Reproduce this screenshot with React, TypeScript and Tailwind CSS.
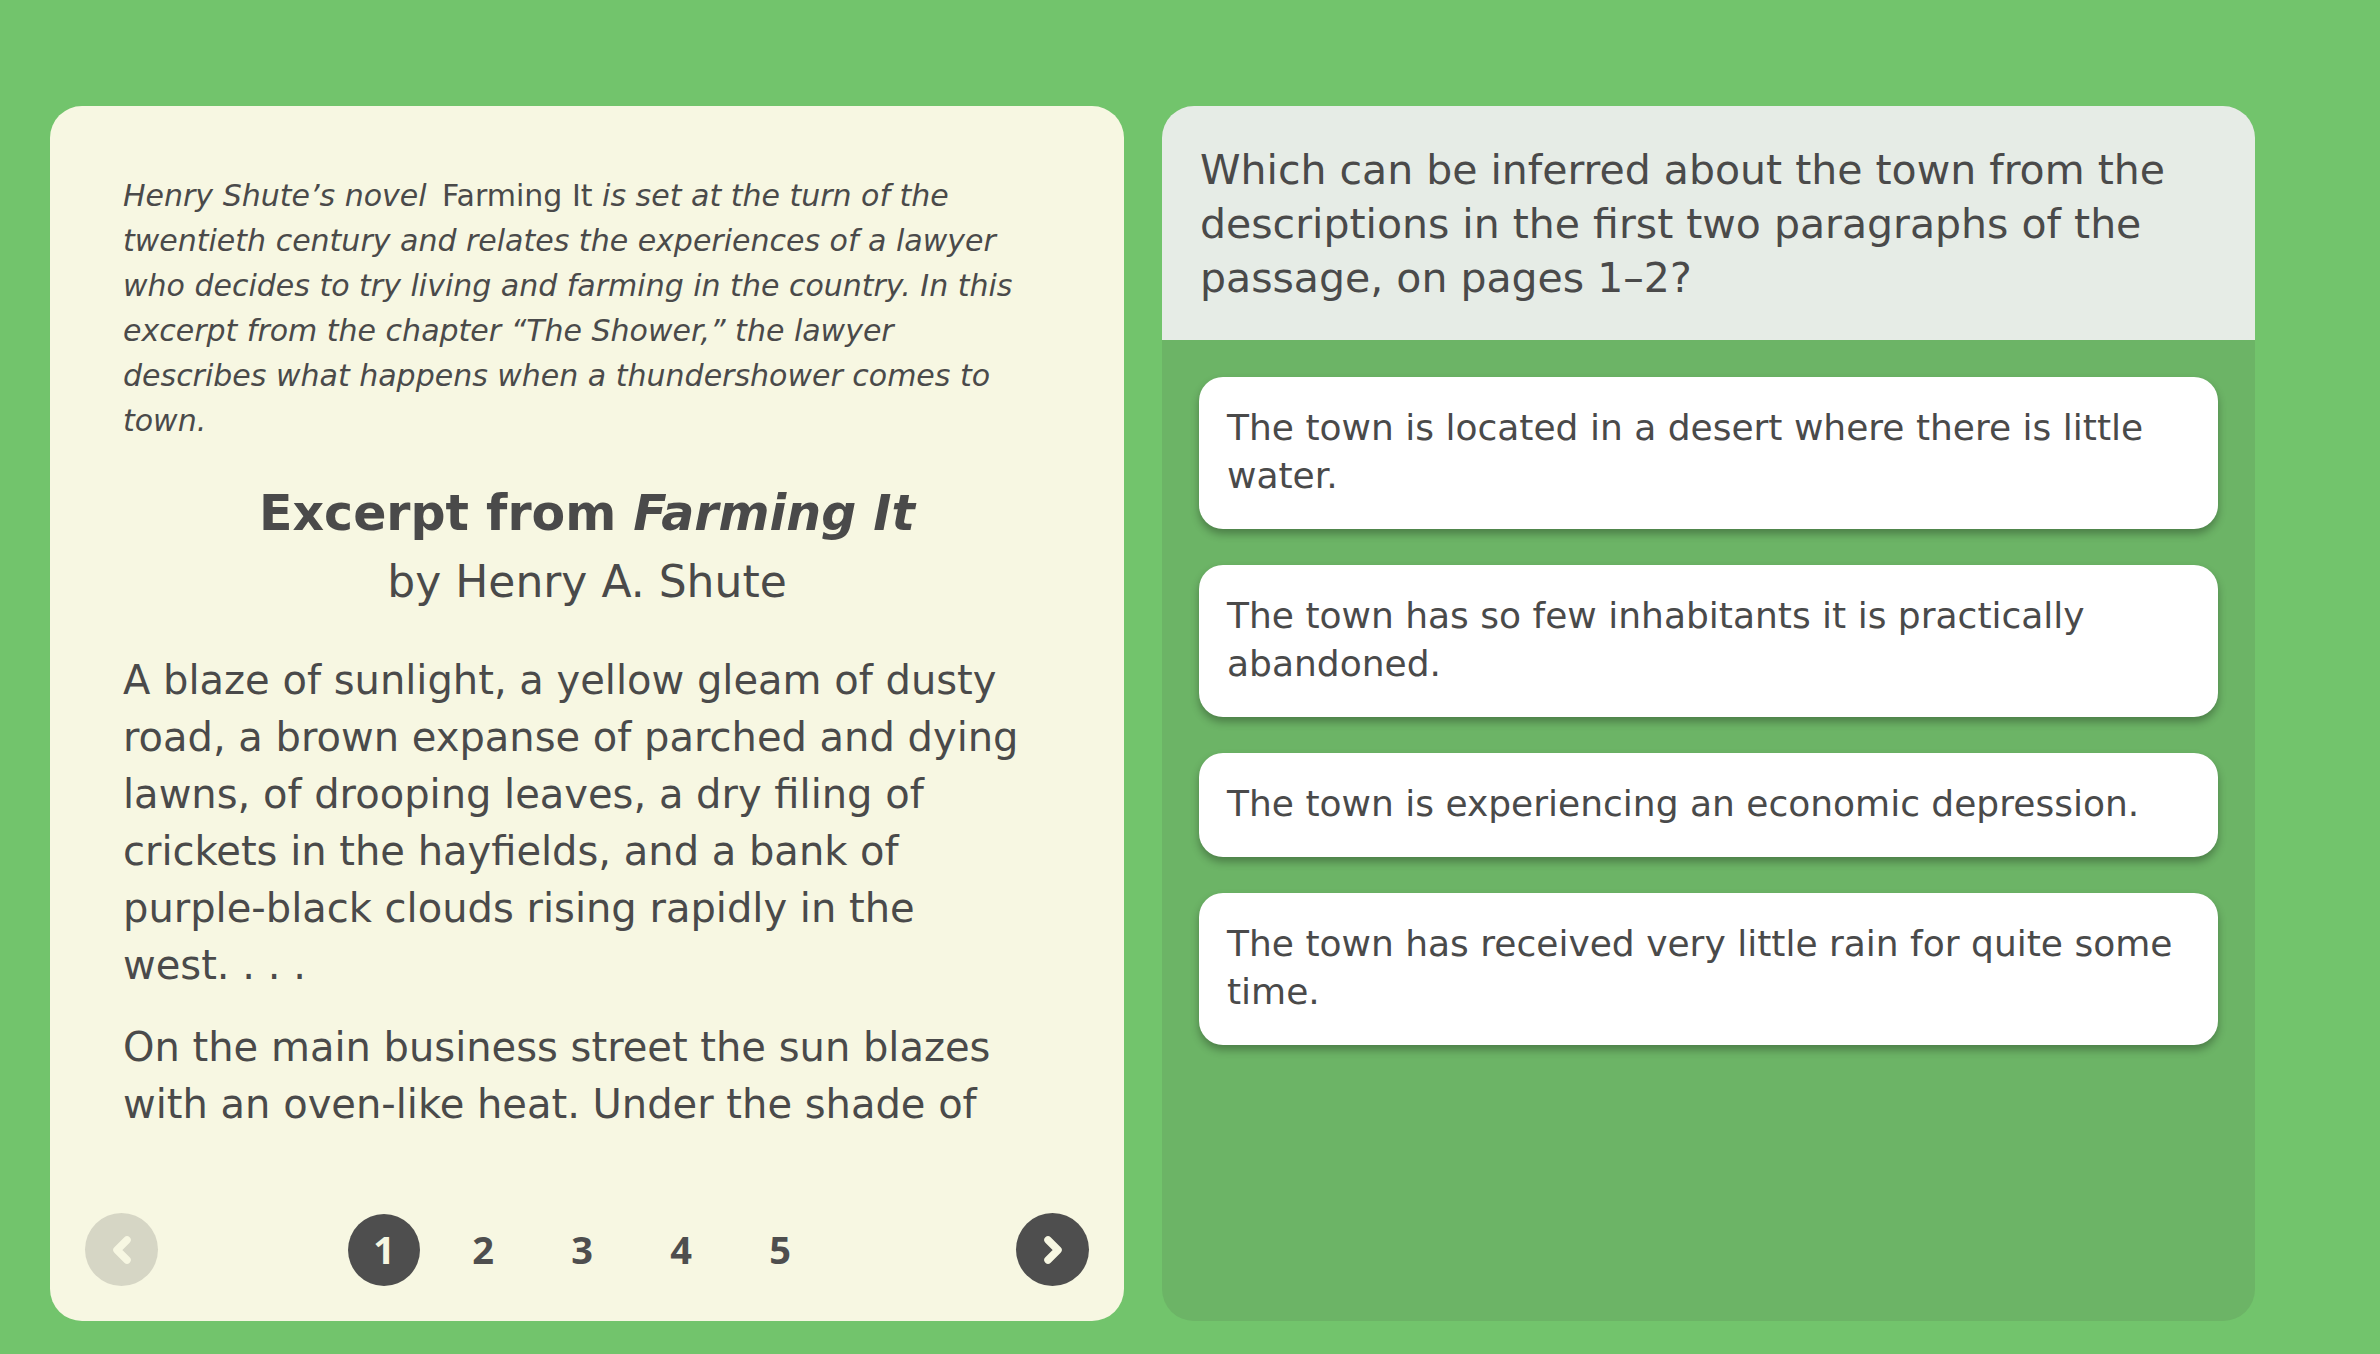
import { useState } from 'react';

const options = [
  'The town is located in a desert where there is little water.',
  'The town has so few inhabitants it is practically abandoned.',
  'The town is experiencing an economic depression.',
  'The town has received very little rain for quite some time.',
];

function Chevron({ dir }: { dir: 'left' | 'right' }) {
  return (
    <svg width="26" height="32" viewBox="0 0 26 32" fill="none">
      <polyline
        points={dir === 'right' ? '8 6 18 16 8 26' : '18 6 8 16 18 26'}
        stroke="#f7f7e2"
        strokeWidth="7.5"
        strokeLinecap="round"
        strokeLinejoin="round"
      />
    </svg>
  );
}

export default function App() {
  const [page, setPage] = useState(1);
  const [picked, setPicked] = useState<number | null>(null);

  return (
    <div className="min-h-screen w-full bg-[#72c46c] font-['DejaVu_Sans',sans-serif] text-[#4a4a4a]">
      <div className="flex gap-[38px] pl-[50px] pt-[106px]">
        {/* passage */}
        <div className="flex h-[1215px] w-[1074px] flex-col rounded-[32px] bg-[#f7f7e2]">
          <div className="flex-1 overflow-hidden px-[73px] pt-[67px]">
            <p className="pr-[22px] text-[30px] leading-[45px] italic">
              Henry Shute’s novel <span className="ml-[6px] not-italic">Farming It</span> is set at the turn of the
              twentieth century and relates the experiences of a lawyer who decides to try living and farming in the
              country. In this excerpt from the chapter “The Shower,” the lawyer describes what happens when a
              thundershower comes to town.
            </p>
            <h1 className="mt-[40px] text-center text-[49px] leading-[62px] font-bold">
              Excerpt from <span className="italic">Farming It</span>
            </h1>
            <h2 className="mt-[12px] text-center text-[44px] leading-[50px]">by Henry A. Shute</h2>
            <p className="mt-[45px] pr-[22px] text-[40px] leading-[57px]">
              A blaze of sunlight, a yellow gleam of dusty road, a brown expanse of parched and dying lawns, of drooping
              leaves, a dry filing of crickets in the hayfields, and a bank of purple-black clouds rising rapidly in the
              west. . . .
            </p>
            <p className="mt-[25px] pr-[22px] text-[40px] leading-[57px]">
              On the main business street the sun blazes with an oven-like heat. Under the shade of the wooden awnings
              a few loungers sit and fan themselves.
            </p>
          </div>
          <div className="flex items-center justify-between px-[35px] pt-[78px] pb-[35px] font-['Open_Sans',sans-serif]">
            <button
              onClick={() => setPage(Math.max(1, page - 1))}
              className="flex h-[73px] w-[73px] items-center justify-center rounded-full bg-[#d6d6c5]"
            >
              <Chevron dir="left" />
            </button>
            <div className="mr-[10px] flex gap-[27px]">
              {[1, 2, 3, 4, 5].map(n => (
                <button
                  key={n}
                  onClick={() => setPage(n)}
                  className={
                    n === page
                      ? 'flex h-[72px] w-[72px] items-center justify-center rounded-full bg-[#4e4e4e] text-[38px] font-bold text-[#f7f7e2]'
                      : 'flex h-[72px] w-[72px] items-center justify-center text-[38px] font-bold text-[#4e4e4e]'
                  }
                >
                  {n}
                </button>
              ))}
            </div>
            <button
              onClick={() => setPage(Math.min(5, page + 1))}
              className="flex h-[73px] w-[73px] items-center justify-center rounded-full bg-[#4e4e4e]"
            >
              <Chevron dir="right" />
            </button>
          </div>
        </div>

        {/* question */}
        <div className="flex h-[1215px] w-[1093px] flex-col overflow-hidden rounded-[32px] bg-[#6cb466]">
          <div className="bg-[#e6ece6] pt-[37px] pr-[36px] pb-[35px] pl-[38px]">
            <p className="text-[41px] leading-[54px]">
              Which can be inferred about the town from the descriptions in the first two paragraphs of the passage, on
              pages 1–2?
            </p>
          </div>
          <div className="flex flex-col gap-[36px] px-[37px] pt-[37px]">
            {options.map((o, i) => (
              <button
                key={i}
                onClick={() => setPicked(i)}
                className={
                  'rounded-[24px] bg-white px-[28px] pt-[27px] pb-[29px] text-left text-[36px] leading-[48px] shadow-[0_5px_9px_rgba(0,0,0,0.3)] ' +
                  (picked === i ? 'ring-4 ring-[#4e4e4e]' : '')
                }
              >
                {o}
              </button>
            ))}
          </div>
        </div>
      </div>
    </div>
  );
}
